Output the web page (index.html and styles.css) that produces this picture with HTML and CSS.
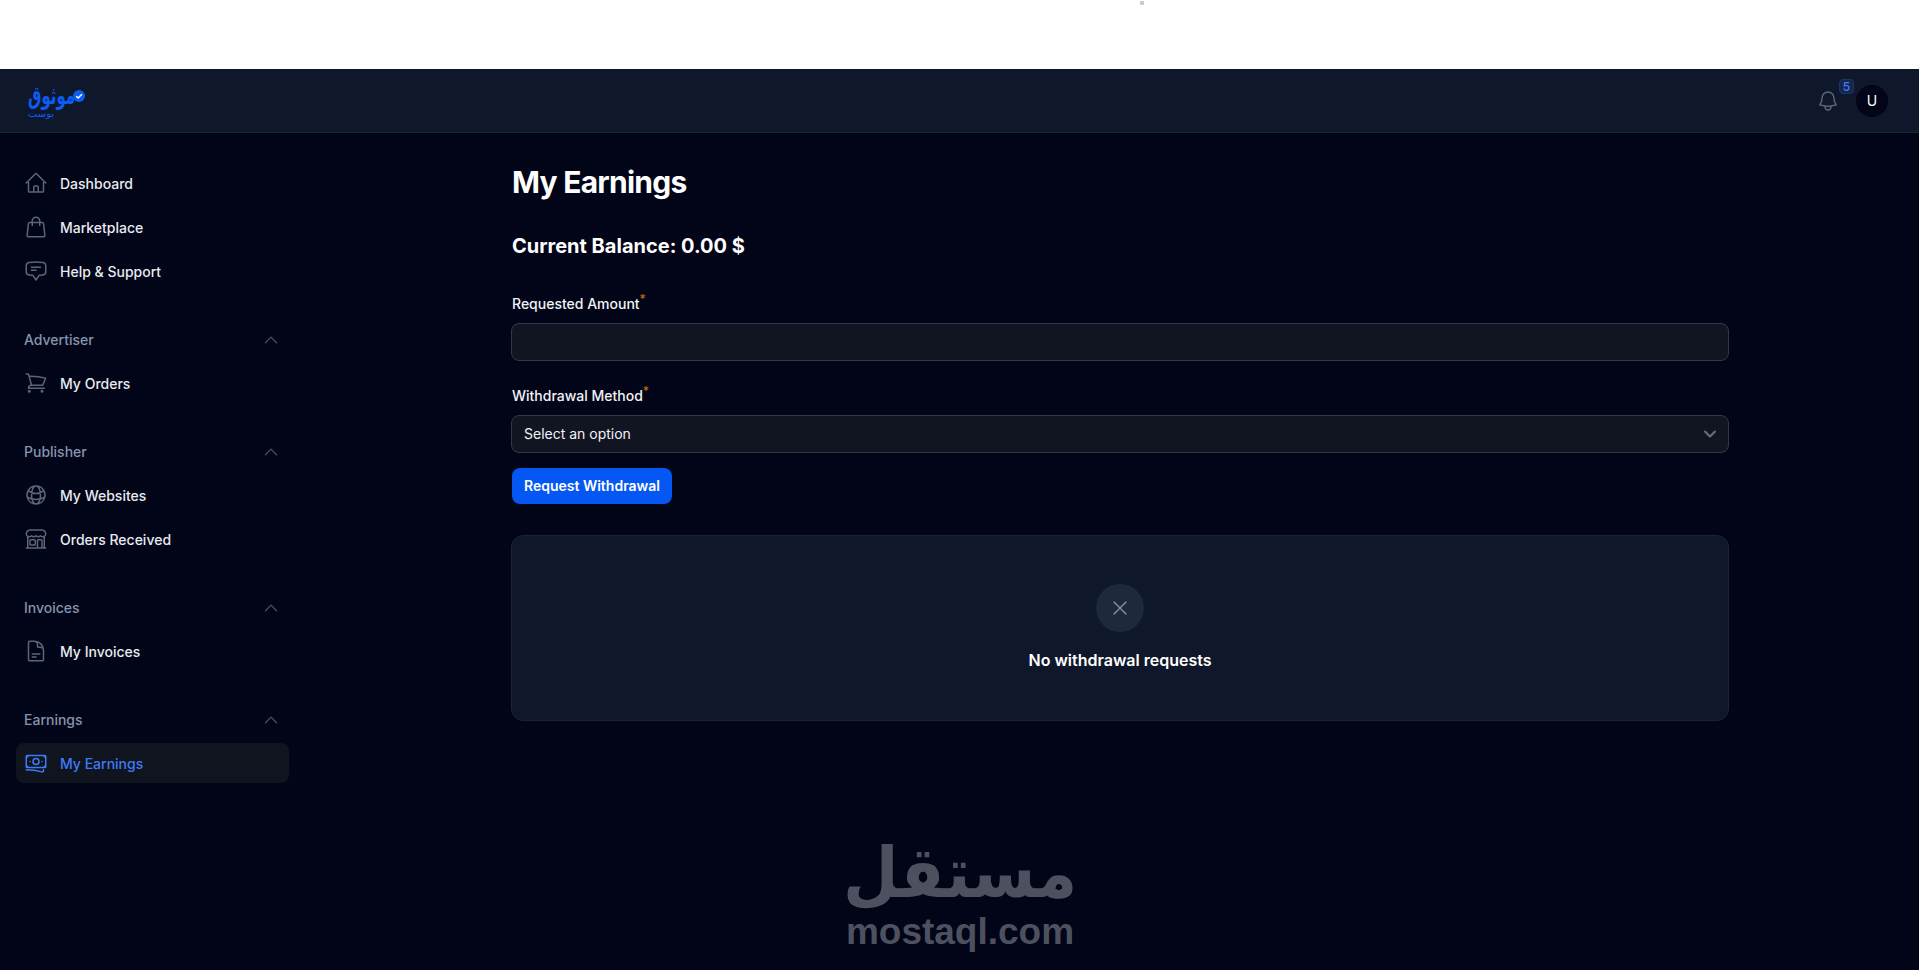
FILE: index.html
```html
<!DOCTYPE html>
<html lang="en">

<head>
    <meta charset="UTF-8">
    <title>My Earnings</title>
    <link rel="stylesheet" href="styles.css">
</head>

<body>

    <div class="top-strip"><span class="top-dot"></span></div>

    <header class="topbar">
        <div class="logo">
            <div class="logo-main">
                <span class="logo-word" dir="rtl" lang="ar">موثوق</span>
                <svg class="logo-check" viewBox="0 0 24 24">
                    <circle cx="12" cy="12" r="12" fill="#0a5cf5" />
                    <path d="M6.5 12.5l3.8 3.5 7.5-7.5" fill="none" stroke="#fff" stroke-width="3" />
                </svg>
            </div>
            <span class="logo-sub" dir="rtl" lang="ar">بوست</span>
        </div>
        <div class="topbar-right">
            <div class="bell">
                <svg class="icon" viewBox="0 0 24 24">
                    <path d="M14.857 17.082a23.848 23.848 0 0 0 5.454-1.31A8.967 8.967 0 0 1 18 9.75V9A6 6 0 0 0 6 9v.75a8.967 8.967 0 0 1-2.312 6.022c1.733.64 3.56 1.085 5.455 1.31m5.714 0a24.255 24.255 0 0 1-5.714 0m5.714 0a3 3 0 1 1-5.714 0" />
                </svg>
                <span class="badge">5</span>
            </div>
            <div class="avatar">U</div>
        </div>
    </header>

    <div class="layout">
        <!-- sidebar -->
        <nav class="sidebar">
            <div class="nav-group">
                <a class="nav-item">
                    <svg class="icon" viewBox="0 0 24 24"><path d="m2.25 12 8.954-8.955c.44-.439 1.152-.439 1.591 0L21.75 12M4.5 9.75v10.125c0 .621.504 1.125 1.125 1.125H9.75v-4.875c0-.621.504-1.125 1.125-1.125h2.25c.621 0 1.125.504 1.125 1.125V21h4.125c.621 0 1.125-.504 1.125-1.125V9.75M8.25 21h8.25" /></svg>
                    Dashboard
                </a>
                <a class="nav-item">
                    <svg class="icon" viewBox="0 0 24 24"><path d="M15.75 10.5V6a3.75 3.75 0 1 0-7.5 0v4.5m11.356-1.993 1.263 12c.07.665-.45 1.243-1.119 1.243H4.25a1.125 1.125 0 0 1-1.12-1.243l1.264-12A1.125 1.125 0 0 1 5.513 7.5h12.974c.576 0 1.059.435 1.119 1.007Z" /></svg>
                    Marketplace
                </a>
                <a class="nav-item">
                    <svg class="icon" viewBox="0 0 24 24"><path d="M7.5 8.25h9m-9 3H12m-9.75 1.51c0 1.6 1.123 2.994 2.707 3.227 1.129.166 2.27.293 3.423.379.35.026.67.21.865.501L12 21l2.755-4.133a1.14 1.14 0 0 1 .865-.501 48.172 48.172 0 0 0 3.423-.379c1.584-.233 2.707-1.626 2.707-3.228V6.741c0-1.602-1.123-2.995-2.707-3.228A48.394 48.394 0 0 0 12 3c-2.392 0-4.744.175-7.043.513C3.373 3.746 2.25 5.14 2.25 6.741v6.018Z" /></svg>
                    Help &amp; Support
                </a>
            </div>

            <div class="nav-group">
                <div class="nav-label">Advertiser
                    <svg class="chevron" viewBox="0 0 24 24"><path d="m4.5 15.75 7.5-7.5 7.5 7.5" /></svg>
                </div>
                <a class="nav-item">
                    <svg class="icon" viewBox="0 0 24 24"><path d="M2.25 3h1.386c.51 0 .955.343 1.087.835l.383 1.437M7.5 14.25a3 3 0 0 0-3 3h15.75m-12.75-3h11.218c1.121-2.3 2.1-4.684 2.924-7.138a60.114 60.114 0 0 0-16.536-1.84M7.5 14.25 5.106 5.272M6 20.25a.75.75 0 1 1-1.5 0 .75.75 0 0 1 1.5 0Zm12.75 0a.75.75 0 1 1-1.5 0 .75.75 0 0 1 1.5 0Z" /></svg>
                    My Orders
                </a>
            </div>

            <div class="nav-group">
                <div class="nav-label">Publisher
                    <svg class="chevron" viewBox="0 0 24 24"><path d="m4.5 15.75 7.5-7.5 7.5 7.5" /></svg>
                </div>
                <a class="nav-item">
                    <svg class="icon" viewBox="0 0 24 24"><path d="M12 21a9.004 9.004 0 0 0 8.716-6.747M12 21a9.004 9.004 0 0 1-8.716-6.747M12 21c2.485 0 4.5-4.03 4.5-9S14.485 3 12 3m0 18c-2.485 0-4.5-4.03-4.5-9S9.515 3 12 3m0 0a8.997 8.997 0 0 1 7.843 4.582M12 3a8.997 8.997 0 0 0-7.843 4.582m15.686 0A11.953 11.953 0 0 1 12 10.5c-2.998 0-5.74-1.1-7.843-2.918m15.686 0A8.959 8.959 0 0 1 21 12c0 .778-.099 1.533-.284 2.253m0 0A17.919 17.919 0 0 1 12 16.5c-3.162 0-6.133-.815-8.716-2.247m0 0A9.015 9.015 0 0 1 3 12c0-1.605.42-3.113 1.157-4.418" /></svg>
                    My Websites
                </a>
                <a class="nav-item">
                    <svg class="icon" viewBox="0 0 24 24"><path d="M13.5 21v-7.5a.75.75 0 0 1 .75-.75h3a.75.75 0 0 1 .75.75V21m-4.5 0H2.36m11.14 0H18m0 0h3.64m-1.39 0V9.349M3.75 21V9.349m0 0a3.001 3.001 0 0 0 3.75-.615A2.993 2.993 0 0 0 9.75 9.75c.896 0 1.7-.393 2.25-1.016a2.993 2.993 0 0 0 2.25 1.016c.896 0 1.7-.393 2.25-1.016a3.001 3.001 0 0 0 3.75.614m-16.5 0a3.004 3.004 0 0 1-.621-4.72l1.189-1.19A1.5 1.5 0 0 1 5.378 3h13.243a1.5 1.5 0 0 1 1.06.44l1.19 1.189a3 3 0 0 1-.621 4.72M6.75 18h3.75a.75.75 0 0 0 .75-.75V13.5a.75.75 0 0 0-.75-.75H6.75a.75.75 0 0 0-.75.75v3.75c0 .414.336.75.75.75Z" /></svg>
                    Orders Received
                </a>
            </div>

            <div class="nav-group">
                <div class="nav-label">Invoices
                    <svg class="chevron" viewBox="0 0 24 24"><path d="m4.5 15.75 7.5-7.5 7.5 7.5" /></svg>
                </div>
                <a class="nav-item">
                    <svg class="icon" viewBox="0 0 24 24"><path d="M19.5 14.25v-2.625a3.375 3.375 0 0 0-3.375-3.375h-1.5A1.125 1.125 0 0 1 13.5 7.125v-1.5a3.375 3.375 0 0 0-3.375-3.375H8.25m0 12.75h7.5m-7.5 3H12M10.5 2.25H5.625c-.621 0-1.125.504-1.125 1.125v17.25c0 .621.504 1.125 1.125 1.125h12.75c.621 0 1.125-.504 1.125-1.125V11.25a9 9 0 0 0-9-9Z" /></svg>
                    My Invoices
                </a>
            </div>

            <div class="nav-group">
                <div class="nav-label">Earnings
                    <svg class="chevron" viewBox="0 0 24 24"><path d="m4.5 15.75 7.5-7.5 7.5 7.5" /></svg>
                </div>
                <a class="nav-item active">
                    <svg class="icon" viewBox="0 0 24 24"><path d="M2.25 18.75a60.07 60.07 0 0 1 15.797 2.101c.727.198 1.453-.342 1.453-1.096V18.75M3.75 4.5v.75A.75.75 0 0 1 3 6h-.75m0 0v-.375c0-.621.504-1.125 1.125-1.125H20.25M2.25 6v9m18-10.5v.75c0 .414.336.75.75.75h.75m-1.5-1.5h.375c.621 0 1.125.504 1.125 1.125v9.75c0 .621-.504 1.125-1.125 1.125h-.375m1.5-1.5H21a.75.75 0 0 0-.75.75v.75m0 0H3.75m0 0h-.375a1.125 1.125 0 0 1-1.125-1.125V15m1.5 1.5v-.75A.75.75 0 0 0 3 15h-.75M15 10.5a3 3 0 1 1-6 0 3 3 0 0 1 6 0Zm3 0h.008v.008H18V10.5Zm-12 0h.008v.008H6V10.5Z" /></svg>
                    My Earnings
                </a>
            </div>
        </nav>

        <!-- main content -->
        <main class="content">
            <h1>My Earnings</h1>
            <h2>Current Balance: 0.00 $</h2>

            <form class="withdraw-form">
                <div class="field">
                    <label>Requested Amount<sup>*</sup></label>
                    <div class="control"></div>
                </div>
                <div class="field">
                    <label>Withdrawal Method<sup>*</sup></label>
                    <div class="control select">
                        Select an option
                        <svg class="select-arrow" viewBox="0 0 24 24"><path d="m19.5 8.25-7.5 7.5-7.5-7.5" /></svg>
                    </div>
                </div>
                <button type="button" class="submit-btn">Request Withdrawal</button>
            </form>

            <div class="empty-card">
                <div class="empty-icon">
                    <svg class="icon" viewBox="0 0 24 24"><path d="M6 18 18 6M6 6l12 12" /></svg>
                </div>
                <p>No withdrawal requests</p>
            </div>
        </main>
    </div>

    <!-- watermark -->
    <div class="watermark">
        <span class="watermark-ar" dir="rtl" lang="ar">مستقل</span>
        <span class="watermark-en">mostaql.com</span>
    </div>

</body>

</html>
```

FILE: styles.css
```css
* {
    margin: 0;
    padding: 0;
    box-sizing: border-box;
}

html,
body {
    height: 970px;
    overflow: hidden;
}

body {
    font-family: Inter, "Liberation Sans", sans-serif;
    background: #020417;
    color: #fff;
    position: relative;
}

.top-strip {
    height: 69px;
    background: #fff;
    position: relative;
}

.top-dot {
    position: absolute;
    left: 1140px;
    top: 1px;
    width: 4px;
    height: 4px;
    border-radius: 1px;
    background: #cfc4dc;
}

/* Top bar */
.topbar {
    height: 64px;
    background: #0f172a;
    border-bottom: 1px solid #1e2433;
    display: flex;
    align-items: center;
    justify-content: space-between;
    padding: 0 31px 0 28px;
}

.logo {
    display: flex;
    flex-direction: column;
    align-items: flex-start;
    color: #0a5cf5;
    font-family: "DejaVu Sans", sans-serif;
}

.logo-main {
    display: flex;
    align-items: center;
    height: 26px;
}

.logo-word {
    display: block;
    margin-right: -31px;
    font-size: 25px;
    font-weight: 700;
    line-height: 26px;
    white-space: nowrap;
    transform: scaleX(0.6);
    transform-origin: left center;
}

.logo-check {
    width: 12px;
    height: 12px;
    margin-left: -3px;
}

.logo-sub {
    font-size: 10px;
    line-height: 10px;
}

.topbar-right {
    display: flex;
    align-items: center;
    gap: 16px;
}

.bell {
    position: relative;
    width: 24px;
    height: 24px;
}

.badge {
    position: absolute;
    left: 23px;
    top: -10px;
    width: 15px;
    height: 15px;
    border-radius: 4px;
    background: #15264d;
    border: 1px solid #1c3468;
    color: #3b82f6;
    font-size: 12px;
    font-weight: 500;
    line-height: 13px;
    text-align: center;
}

.avatar {
    width: 32px;
    height: 32px;
    border-radius: 50%;
    background: #020417;
    display: flex;
    align-items: center;
    justify-content: center;
    font-size: 14px;
}

.icon {
    width: 24px;
    height: 24px;
    flex-shrink: 0;
    fill: none;
    stroke: #5c6679;
    stroke-width: 1.5;
    stroke-linecap: round;
    stroke-linejoin: round;
}

/* Layout */
.layout {
    display: flex;
}

.sidebar {
    width: 320px;
    flex-shrink: 0;
    padding: 30px 31px 0 16px;
    display: flex;
    flex-direction: column;
    gap: 39px;
}

.nav-group {
    display: flex;
    flex-direction: column;
    gap: 4px;
}

.nav-label {
    display: flex;
    align-items: center;
    justify-content: space-between;
    height: 20px;
    margin-bottom: 9px;
    padding: 0 9px 0 8px;
    font-size: 14px;
    font-weight: 500;
    line-height: 20px;
    color: #8694ad;
}

.chevron {
    width: 18px;
    height: 18px;
    fill: none;
    stroke: #4f586a;
    stroke-width: 1.6;
    stroke-linecap: round;
    stroke-linejoin: round;
}

.nav-item {
    display: flex;
    align-items: center;
    gap: 12px;
    height: 40px;
    padding: 0 8px;
    border-radius: 8px;
    font-size: 14px;
    font-weight: 500;
    color: #e8ebf0;
}

.nav-item.active {
    background: #10141f;
    color: #3d7bf5;
}

.nav-item.active .icon {
    stroke: #3d7bf5;
}

/* Content */
.content {
    width: 1216px;
    margin-left: 192px;
    padding-top: 31px;
}

h1 {
    font-size: 30px;
    font-weight: 700;
    line-height: 36px;
    letter-spacing: -0.75px;
    margin-bottom: 32px;
}

h2 {
    font-size: 20px;
    font-weight: 700;
    line-height: 28px;
    margin-bottom: 34px;
}

.field {
    margin-bottom: 25px;
}

.field label {
    display: block;
    font-size: 14px;
    font-weight: 500;
    line-height: 20px;
    margin-bottom: 9px;
    color: #f1f3f6;
}

.field sup {
    color: #c2660f;
    font-size: 12px;
    line-height: 0;
}

.control {
    height: 38px;
    margin: 0 -1px;
    background: #111421;
    border: 1px solid #33374a;
    border-radius: 8px;
}

.select {
    display: flex;
    align-items: center;
    justify-content: space-between;
    padding: 0 10px 1px 12px;
    font-size: 14px;
    color: #f1f3f6;
}

.select-arrow {
    width: 16px;
    height: 16px;
    margin-top: 1px;
    fill: none;
    stroke: #6a7080;
    stroke-width: 3;
    stroke-linecap: round;
    stroke-linejoin: round;
}

.submit-btn {
    display: block;
    width: 160px;
    height: 36px;
    margin-top: -10px;
    padding-bottom: 2px;
    background: #0457f2;
    color: #fff;
    border: none;
    border-radius: 8px;
    font-family: inherit;
    font-size: 14px;
    font-weight: 600;
}

.empty-card {
    margin: 31px -1px 0;
    height: 186px;
    padding: 48px 0;
    background: #0f172a;
    border: 1px solid #1b2232;
    border-radius: 12px;
    display: flex;
    flex-direction: column;
    align-items: center;
    gap: 16px;
}

.empty-icon {
    width: 48px;
    height: 48px;
    border-radius: 50%;
    background: #1e293b;
    display: flex;
    align-items: center;
    justify-content: center;
}

.empty-icon .icon {
    stroke: #7f8ba3;
}

.empty-card p {
    font-size: 16px;
    font-weight: 600;
    line-height: 24px;
}

/* Watermark sits over the page */
.watermark {
    position: absolute;
    left: 845px;
    top: 838px;
    width: 230px;
    display: flex;
    flex-direction: column;
    align-items: center;
    color: #4d515f;
}

.watermark-ar {
    font-family: "DejaVu Sans", sans-serif;
    font-size: 64px;
    font-weight: 700;
    line-height: 70px;
    transform: scaleY(1.1);
    white-space: nowrap;
}

.watermark-en {
    margin-top: 4px;
    font-family: "Liberation Sans", sans-serif;
    font-size: 37px;
    font-weight: 700;
    line-height: 40px;
}
```
